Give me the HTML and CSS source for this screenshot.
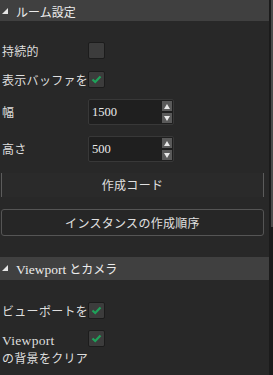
FILE: index.html
```html
<!DOCTYPE html>
<html lang="ja">
<head>
<meta charset="utf-8">
<link rel="stylesheet" href="styles.css">
</head>
<body>
<div class="frame">
  <div class="panel">
    <div class="header header-first">
      <svg class="tri" width="6" height="6" viewBox="0 0 6 6"><polygon points="6,0 6,6 0,6" fill="#e6e6e6"/></svg>
      <span>ルーム設定</span>
    </div>
    <div class="section section-first">
      <div class="row row-check">
        <div class="label">持続的</div>
        <div class="checkbox"></div>
      </div>
      <div class="row row-check gap12">
        <div class="label">表示バッファを</div>
        <div class="checkbox"><svg width="15" height="15" viewBox="0 0 15 15"><polyline points="3.5,7.5 6.2,10 11.5,4.5" fill="none" stroke="#1fa25a" stroke-width="2.2"/></svg></div>
      </div>
      <div class="row row-num gap11">
        <div class="label">幅</div>
        <div class="num">
          <span class="num-val">1500</span>
          <div class="spin">
            <div class="spin-btn"><svg width="6" height="5" viewBox="0 0 6 5"><polygon points="3,0 6,5 0,5" fill="#e8e8e8"/></svg></div>
            <div class="spin-btn"><svg width="6" height="5" viewBox="0 0 6 5"><polygon points="0,0 6,0 3,5" fill="#e8e8e8"/></svg></div>
          </div>
        </div>
      </div>
      <div class="row row-num gap11">
        <div class="label">高さ</div>
        <div class="num">
          <span class="num-val">500</span>
          <div class="spin">
            <div class="spin-btn"><svg width="6" height="5" viewBox="0 0 6 5"><polygon points="3,0 6,5 0,5" fill="#e8e8e8"/></svg></div>
            <div class="spin-btn"><svg width="6" height="5" viewBox="0 0 6 5"><polygon points="0,0 6,0 3,5" fill="#e8e8e8"/></svg></div>
          </div>
        </div>
      </div>
      <div class="btn btn-sides gap11">作成コード</div>
      <div class="btn btn-box gap12">インスタンスの作成順序</div>
    </div>
    <div class="header header-second">
      <svg class="tri" width="6" height="6" viewBox="0 0 6 6"><polygon points="6,0 6,6 0,6" fill="#e6e6e6"/></svg>
      <span><span class="lat">Viewport</span> とカメラ</span>
    </div>
    <div class="section section-second">
      <div class="row row-check">
        <div class="label">ビューポートを:</div>
        <div class="checkbox"><svg width="15" height="15" viewBox="0 0 15 15"><polyline points="3.5,7.5 6.2,10 11.5,4.5" fill="none" stroke="#1fa25a" stroke-width="2.2"/></svg></div>
      </div>
      <div class="row row-top gap11">
        <div class="label label-wrap"><span class="line lat">Viewport</span><span class="line">の背景をクリア</span></div>
        <div class="checkbox"><svg width="15" height="15" viewBox="0 0 15 15"><polyline points="3.5,7.5 6.2,10 11.5,4.5" fill="none" stroke="#1fa25a" stroke-width="2.2"/></svg></div>
      </div>
    </div>
  </div>
  <div class="scrollbar"><div class="thumb"></div></div>
</div>
</body>
</html>
```

FILE: styles.css
```css
html, body {
  margin: 0;
  padding: 0;
  background: #282828;
  overflow: hidden;
}
body {
  font-family: "Liberation Serif", "Noto Sans CJK JP", serif;
  font-size: 12px;
  color: #dedede;
}
.frame {
  display: flex;
  width: 273px;
  height: 375px;
}
.panel {
  width: 269px;
  display: flex;
  flex-direction: column;
}
.scrollbar {
  width: 4px;
  background: #1b1b1b;
  display: flex;
  justify-content: flex-end;
}
.thumb {
  width: 2px;
  height: 227px;
  background: #4c4c4c;
}
.header {
  background: #404040;
  display: flex;
  align-items: center;
  color: #ececec;
  font-size: 12px;
}
.header-first {
  height: 21px;
  padding-top: 2px;
  box-sizing: border-box;
}
.header-second {
  height: 23px;
  margin-top: 21px;
}
.tri {
  margin-left: 2px;
  margin-right: 8px;
  margin-top: -1px;
}
.lat {
  font-size: 13.5px;
}
.section {
  display: flex;
  flex-direction: column;
}
.section-first {
  padding-top: 21px;
}
.section-second {
  padding-top: 22px;
}
.row {
  display: flex;
  align-items: center;
}
.row-check {
  height: 17px;
}
.row-num {
  height: 26px;
}
.row-top {
  align-items: flex-start;
}
.gap11 { margin-top: 11px; }
.gap12 { margin-top: 12px; }
.label {
  width: 86px;
  flex: none;
  padding-left: 2px;
  white-space: nowrap;
  letter-spacing: 0.3px;
  font-size: 12px;
}
.label-wrap {
  display: flex;
  flex-direction: column;
  line-height: 18px;
  margin-top: 2px;
}
.line {
  display: block;
}
.checkbox {
  position: relative;
  width: 15px;
  height: 15px;
  background: #3c3c3c;
  border: 1px solid #1c1c1c;
  border-radius: 2px;
  display: flex;
}
.num {
  width: 86px;
  height: 26px;
  box-sizing: border-box;
  background: #1f1f1f;
  border: 1px solid #383838;
  border-radius: 2px;
  display: flex;
  align-items: center;
  justify-content: space-between;
  padding: 0 1px 0 3px;
}
.num-val {
  font-size: 12.5px;
  color: #eaeaea;
  padding-top: 1px;
}
.spin {
  display: flex;
  flex-direction: column;
  gap: 2px;
}
.spin-btn {
  width: 10px;
  height: 10px;
  background: #5a5a5a;
  display: flex;
  align-items: center;
  justify-content: center;
}
.btn {
  display: flex;
  align-items: center;
  justify-content: center;
  margin-left: 1px;
  width: 263px;
  box-sizing: border-box;
  color: #e0e0e0;
  letter-spacing: 0.3px;
}
.btn-sides {
  height: 24px;
  background: #2a2a2a;
  border-left: 1px solid #5c5c5c;
  border-right: 1px solid #5c5c5c;
}
.btn-box {
  height: 27px;
  border: 1px solid #555555;
  border-radius: 3px;
  background: #262626;
}
```
